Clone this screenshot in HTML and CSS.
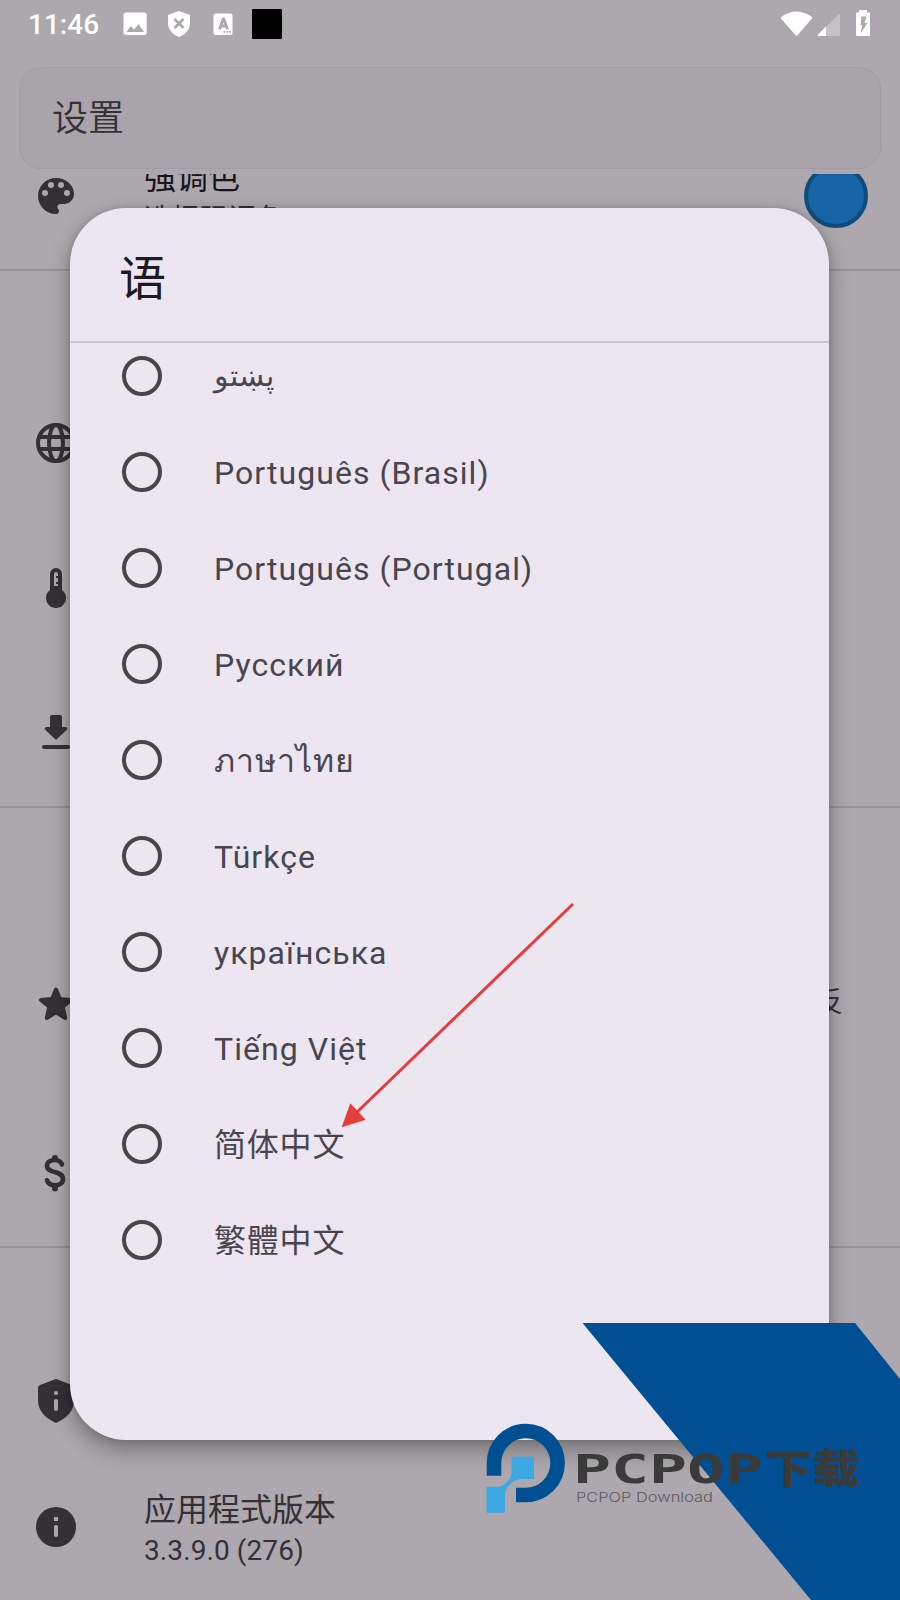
FILE: index.html
```html
<!DOCTYPE html>
<html lang="zh-CN">
<head>
<meta charset="utf-8">
<title>设置</title>
<link rel="stylesheet" href="styles.css">
</head>
<body>
<div class="screen">
  <header class="status">
    <span class="clock">11:46</span>
    <svg class="status-left" width="166" height="48" viewBox="120 0 166 48">
      <path fill="#fff" fill-rule="evenodd" d="M126 12.500h18.200a2.500 2.500 0 0 1 2.500 2.500v17.500a2.500 2.500 0 0 1-2.500 2.500H126a2.500 2.500 0 0 1-2.500-2.500V15a2.500 2.500 0 0 1 2.500-2.500zM126.500 32h17.500l-5.500-8-4.500 5.800-3.200-3.800z"/>
      <path fill="#fff" d="M179 11l11 4v8.500c0 6-4.600 11-11 13.500-6.400-2.500-11-7.500-11-13.500V15z"/>
      <path stroke="#aca8ad" stroke-width="2.600" d="M174.500 19l9 9m0-9l-9 9"/>
      <rect x="213.500" y="13.500" width="19" height="21.500" rx="2" fill="#fff"/>
      <path fill="none" stroke="#aca8ad" stroke-width="2.800" d="M219.500 29.200l3.600-10h.8l3.600 10M220.500 26h5.600"/>
      <path fill="#aca8ad" d="M223.500 31h1.800v1.800h-1.800zM226.500 31h1.800v1.800h-1.800zM229.300 31h1.800v1.800h-1.800z"/>
      <rect x="252" y="9" width="30" height="30" rx="1" fill="#000"/>
    </svg>
    <svg class="status-right" width="92" height="48" viewBox="780 0 92 48">
      <path fill="#fff" d="M781 17q15.500-11 31 0v1.500L797.700 35q-1.200 1.500-2.400 0L781 18.500z"/>
      <path fill="#c5c2c6" d="M826 27l13-13q1-.5 1 1v21h-14z"/>
      <path fill="#fff" d="M826 26.500V36h-7.500q-1.500-.5-.5-1.500z"/>
      <path fill="#fff" d="M859 10h8v2.500h2q1 0 1 1V35q0 1-1 1h-12q-1 0-1-1V13.500q0-1 1-1h2z"/>
      <path fill="#aca8ad" d="M861.500 16.500h5l-2 6.500h3l-6.800 10.500 1.600-8.500h-1.800z"/>
    </svg>
  </header>

  <div class="toolbar">设置</div>

  <main class="list">
    <section class="group first">
      <div class="row">
        <svg class="icon" viewBox="0 0 48 48"><path fill="#333036" fill-rule="evenodd" d="M24 6C14 6 6 14 6 24s8 18 18 18c1.700 0 3-1.300 3-3 0-.8-.3-1.500-.8-2-.5-.6-.8-1.300-.8-2 0-1.700 1.300-3 3-3H32c5.500 0 10-4.500 10-10C42 13 34 6 24 6zM13 24a3 3 0 1 1 0-6 3 3 0 0 1 0 6zM19 16a3 3 0 1 1 0-6 3 3 0 0 1 0 6zM29 16a3 3 0 1 1 0-6 3 3 0 0 1 0 6zM35 24a3 3 0 1 1 0-6 3 3 0 0 1 0 6z"/></svg>
        <div class="texts"><div class="name dark">强调色</div><div class="desc">选择强调色</div></div>
        <span class="swatch"></span>
      </div>
    </section>
    <section class="group second">
      <div class="row">
        <svg class="icon" viewBox="0 0 48 48"><g fill="none" stroke="#333036" stroke-width="4"><circle cx="24" cy="24" r="18"/><ellipse cx="24" cy="24" rx="7" ry="18"/><path d="M7.500 18h33M7.500 30h33"/></g></svg>
      </div>
      <div class="row">
        <svg class="icon" viewBox="0 0 48 48"><path fill="#333036" d="M18 26V10a6 6 0 0 1 12 0v16a10 10 0 1 1-12 0z"/><path fill="#aca8ad" d="M22 22V10a2 2 0 0 1 4 0v2h-2v2h2v4h-2v2h2v2z"/></svg>
      </div>
      <div class="row">
        <svg class="icon" viewBox="0 0 48 48"><path fill="#333036" d="M20 7h8q2 0 2 2v10h3.500q3 .5 1 3L25 31q-1 1-2 0l-9.500-9q-2-2.500 1-3H18V9q0-2 2-2z"/><path stroke="#333036" stroke-width="4" stroke-linecap="round" d="M12 39h24"/></svg>
      </div>
    </section>
    <section class="group third">
      <div class="row tall">
        <svg class="icon" viewBox="0 0 48 48"><path fill="#333036" stroke="#333036" stroke-width="4" stroke-linejoin="round" d="M24 8.500l4 9.600 11 .9-8.300 6.800L33.200 37 24 31.200 14.800 37l2.500-11.200L9 19l11-.9z"/></svg>
        <span class="desc trailing">反</span>
      </div>
      <div class="row">
        <svg class="icon" viewBox="0 0 48 48"><path fill="none" stroke="#333036" stroke-width="4.600" stroke-linecap="round" d="M30 15.500C28.500 12 26.500 11 23 11c-4.500 0-8 2-8 6 0 8 16 4 16 13 0 4-3.500 6.300-8 6.300-4.500 0-7-2-8-5"/><path stroke="#333036" stroke-width="6" stroke-linecap="round" d="M23 9v1M23 38.500v1"/></svg>
      </div>
    </section>
    <section class="group fourth">
      <div class="row short">
        <svg class="icon" viewBox="0 0 48 48"><path fill="#333036" d="M24 2l16 6q2 1 2 3v12c0 11-7 18-18 23C13 41 6 34 6 23V11q0-2 2-3z"/><circle cx="24" cy="16" r="2.100" fill="#aca8ad"/><path stroke="#aca8ad" stroke-width="4" stroke-linecap="round" d="M24 24v8"/></svg>
      </div>
      <div class="row">
        <svg class="icon" viewBox="0 0 48 48"><circle cx="24" cy="24" r="20" fill="#333036"/><path fill="#aca8ad" d="M22 14h4v4h-4z"/><path stroke="#aca8ad" stroke-width="4" stroke-linecap="round" d="M24 24v8"/></svg>
        <div class="texts"><div class="name">应用程式版本</div><div class="desc version">3.3.9.0 (276)</div></div>
      </div>
    </section>
  </main>

  <div class="dialog">
    <h1 class="dialog-title">语</h1>
    <div class="options">
      <div class="option"><i class="radio"></i><span class="arabic">پښتو</span></div>
      <div class="option"><i class="radio"></i><span>Português (Brasil)</span></div>
      <div class="option"><i class="radio"></i><span>Português (Portugal)</span></div>
      <div class="option"><i class="radio"></i><span>Русский</span></div>
      <div class="option"><i class="radio"></i><span class="thai">ภาษาไทย</span></div>
      <div class="option"><i class="radio"></i><span>Türkçe</span></div>
      <div class="option"><i class="radio"></i><span>українська</span></div>
      <div class="option"><i class="radio"></i><span>Tiếng Việt</span></div>
      <div class="option"><i class="radio"></i><span class="cjk">简体中文</span></div>
      <div class="option"><i class="radio"></i><span class="cjk tc">繁體中文</span></div>
    </div>
  </div>

  <svg class="overlay" width="900" height="1600" viewBox="0 0 900 1600">
    <path stroke="#e53d3d" stroke-width="3" d="M573 904L354 1115"/>
    <path fill="#e53d3d" d="M341.700 1127.300l8.600-24 15.400 16.400z"/>
    <path fill="#004f92" d="M582.500 1323H855l45 56v221h-89z"/>
    <path fill="none" stroke="#004f92" stroke-width="14.600" d="M494 1475.700V1463a31.800 32 0 1 1 31.800 32H516"/>
    <path fill="#3ca9e3" d="M514 1456.700h18q2 0 2 2V1479h-13.500q-6 .5-10.500 5.500-5 4.500-5 10v18.300h-18.500v-26h11q5 0 8.500-4 5.500-5 5.500-9.500v-14.600q0-2 2.500-2z"/>
    <text class="brand" x="573" y="1483" textLength="190" lengthAdjust="spacingAndGlyphs">PCPOP</text>
    <text class="brand-cn" x="765" y="1483" textLength="95" lengthAdjust="spacingAndGlyphs">下载</text>
    <text class="brand-sub" x="576" y="1502" textLength="137" lengthAdjust="spacingAndGlyphs">PCPOP Download</text>
  </svg>
</div>
</body>
</html>
```
FILE: styles.css
```css
* { box-sizing: border-box; }

body {
  margin: 0;
  font-family: Roboto, "Noto Sans CJK SC", "Noto Sans", sans-serif;
  color: #333036;
}

.screen {
  position: relative;
  width: 900px;
  height: 1600px;
  overflow: hidden;
  background: #aca8ad;
  display: flex;
  flex-direction: column;
}

.status {
  height: 48px;
  padding: 0 28px 0 28px;
  display: flex;
  align-items: center;
  flex: none;
}
.clock {
  width: 92px;
  color: #fff;
  font-size: 28px;
  font-weight: 500;
  letter-spacing: 0;
  line-height: 48px;
  padding-top: 2px;
}
.status-right { margin-left: auto; }

.toolbar {
  flex: none;
  margin: 19px 19px 5px;
  height: 102px;
  padding: 1px 32px 0;
  border: 1px solid #a19da2;
  border-radius: 22px;
  background: #a8a4a9;
  font-size: 36px;
  font-weight: 350;
  line-height: 100px;
}

/* Settings list, scrolled under the toolbar */
.list { flex: 1; overflow: hidden; }
.group { border-bottom: 2px solid #979398; }
.first { margin-top: -50px; height: 147px; }
.second { padding-top: 100px; height: 537px; }
.third { padding-top: 100px; height: 440px; }
.fourth { padding-top: 99px; border: 0; }
.row {
  height: 144.500px;
  padding: 0 32px;
  display: flex;
  align-items: center;
}
.first .row { height: 144px; }
.tall { height: 193px; }
.short { height: 108px; }
.icon { width: 48px; height: 48px; flex: none; }
.texts { margin-left: 64px; padding-top: 3px; }
.name { font-size: 32px; line-height: 44px; white-space: nowrap; }
.dark { color: #17151a; }
.desc { font-size: 28px; line-height: 38px; white-space: nowrap; }
.version { letter-spacing: .1px; }
.first .desc { line-height: 40px; }
.trailing { margin: 0 25px 3px auto; }
.swatch {
  width: 64px;
  height: 64px;
  margin-left: auto;
  border: 4px solid #0f4b7b;
  border-radius: 50%;
  background: #1765a4;
}

.dialog {
  position: absolute;
  left: 70px;
  top: 208px;
  width: 759px;
  height: 1232px;
  border-radius: 56px;
  background: #ece6f0;
  box-shadow: 0 10px 22px rgba(0, 0, 0, .32), 0 0 6px rgba(0, 0, 0, .15);
}
.dialog-title {
  margin: 0;
  height: 135px;
  padding: 3px 0 0 49px;
  border-bottom: 2px solid #cac4d0;
  color: #1d1b20;
  font-size: 47px;
  font-weight: 400;
  line-height: 135px;
}
.options { overflow: hidden; }
.option {
  height: 96px;
  padding-left: 52px;
  display: flex;
  align-items: center;
  gap: 52px;
  color: #49454f;
  font-size: 32px;
  letter-spacing: 1.050px;
}
.option:first-child { margin-top: -15px; }
.option span { padding-top: 2px; }
.radio {
  width: 40px;
  height: 40px;
  border: 4px solid #49454f;
  border-radius: 50%;
}
.option .arabic { font-size: 30px; letter-spacing: 0; padding: 0 0 2px; }
.option .thai { padding-top: 0; }
.option .cjk { padding: 0 0 5px; letter-spacing: .8px; }
.tc { font-family: "Noto Sans CJK TC", sans-serif; }

/* Annotation arrow and watermark above everything */
.overlay { position: absolute; left: 0; top: 0; fill: none; }
.brand { font: 700 39px "DejaVu Sans Mono", monospace; fill: #3a3a3a; }
.brand-cn { font: 900 40px "Noto Sans CJK SC", sans-serif; fill: #3a3a3a; }
.brand-sub { font: 300 13px Inter, sans-serif; fill: #5c5a5e; }
```
